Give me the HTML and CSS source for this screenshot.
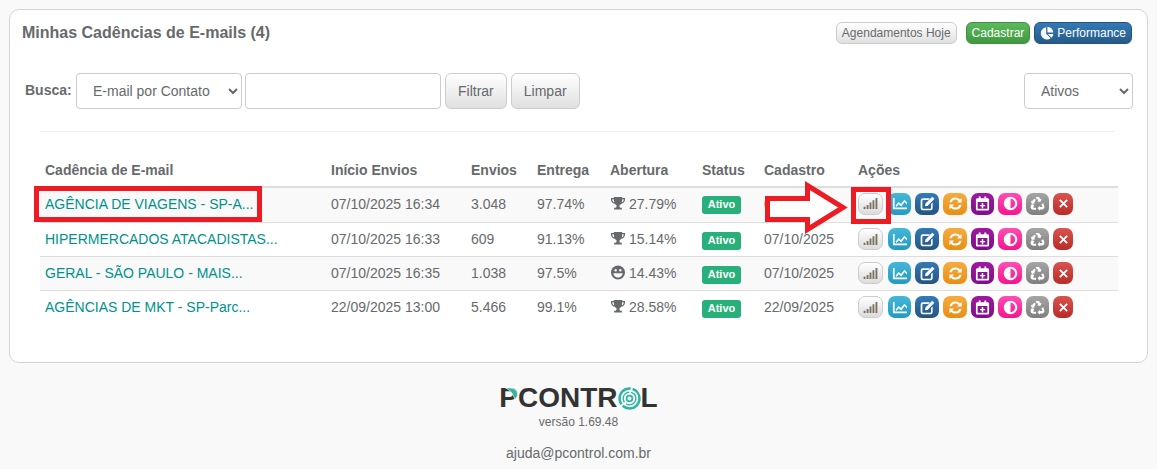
FILE: index.html
```html
<!DOCTYPE html>
<html lang="pt-BR">
<head>
  <meta charset="UTF-8" />
  <title>Minhas Cadências de E-mails</title>
  <link rel="stylesheet" href="styles.css">
</head>
<body>
  <svg class="defs" width="0" height="0" aria-hidden="true">
    <symbol id="i-bars" viewBox="0 0 16 12"><path d="M.5 9.500h2V12h-2zM3.800 7.500h2V12h-2zM7 5h2v7H7zM10.200 2.500h2V12h-2zM13.500 0h2v12h-2z"/></symbol>
    <symbol id="i-line" viewBox="0 0 16 14"><path d="M1 1h1.800v10.200H16V13H1z"/><path d="M3.800 9.200 7 5.300l2.600 2.300L13.300 3 16 5.800V8l-2.600-2.500-3.600 4.600-2.600-2.300-2.400 2.900z"/></symbol>
    <symbol id="i-edit" viewBox="0 0 16 16"><path d="M3 2.500h7.500L9 4.300H3.300a.8.800 0 0 0-.8.800v7.600c0 .4.400.8.800.8h7.600c.4 0 .8-.4.800-.8V8.500l1.800-1.700V13a2.300 2.300 0 0 1-2.300 2.300H3A2.300 2.300 0 0 1 .7 13V4.800A2.300 2.300 0 0 1 3 2.500z"/><path d="M13 .8 15.400 3 8.300 10.300l-3 .7.600-3z"/></symbol>
    <symbol id="i-sync" viewBox="0 0 16 16"><path d="M8 1.500c2 0 3.700.8 4.800 2.100L14.500 2v5H9.600l1.700-1.800A4.400 4.400 0 0 0 3.800 6.700H1.500A6.600 6.600 0 0 1 8 1.500z"/><path d="M8 14.500c-2 0-3.700-.8-4.800-2.100L1.500 14V9h4.900l-1.700 1.800a4.400 4.400 0 0 0 7.500-1.500h2.300A6.600 6.600 0 0 1 8 14.500z"/></symbol>
    <symbol id="i-cal" viewBox="0 0 16 16"><path fill-rule="evenodd" d="M4 .5h2v1.800h4V.5h2v1.800h1.500c.8 0 1.500.7 1.500 1.500v10.200c0 .8-.7 1.500-1.500 1.500h-11c-.8 0-1.500-.7-1.500-1.500V3.800c0-.8.700-1.500 1.500-1.500H4zM2.800 6.500v7.200h10.400V6.500zM7.200 7.500h1.600v2h2V11h-2v2H7.200v-2h-2V9.500h2z"/></symbol>
    <symbol id="i-half" viewBox="0 0 16 16"><path fill-rule="evenodd" d="M8 .8a7.200 7.200 0 1 1 0 14.400A7.200 7.200 0 0 1 8 .8zm0 2.200v10a5 5 0 0 0 0-10z"/></symbol>
    <symbol id="i-recycle" viewBox="0 0 16 16"><path d="M6.200 1h3.400l1.500 2.500 1.200-.7-1.200 3.600-3.600-.8 1.200-.7-1.300-2.200-1 .1zM4.500 3l1.700 1-1.700 3 1.100.7-3.700.7L.8 4.900l1.200.7zM.8 10.500 2 8.400l2.600 1.500-1.100 1.900c-.2.400 0 .8.500.8h2.500v2H3.300c-1.900 0-3.300-2.100-2.500-4.100zM15.200 10.300c.8 2-.600 4-2.500 4h-2.200v1.400L8 13l2.500-2.700v1.500h2.100c.5 0 .7-.4.500-.8l-1.200-2 2.200-1.200z"/></symbol>
    <symbol id="i-x" viewBox="0 0 16 16"><path d="m3.600 1.800 4.400 4.400 4.400-4.400 1.800 1.800L9.800 8l4.400 4.400-1.800 1.800L8 9.800l-4.400 4.400-1.800-1.800L6.200 8 1.800 3.600z"/></symbol>
    <symbol id="i-trophy" viewBox="0 0 16 16"><path fill-rule="evenodd" d="M3.500 1h9v1.200H15.500v1.600c0 2.500-1.600 4.100-3.900 4.500-.5.700-1.200 1.200-2 1.500v1.700c0 .5.300.9 1 .9h1.500V14.500h-8.200v-2.100h1.500c.7 0 1-.4 1-.9V9.800c-.8-.3-1.500-.8-2-1.500C2.100 7.900.5 6.300.5 3.800V2.200h3zM2 3.500v.4c0 1.400.7 2.400 2 2.800-.3-1-.5-2.100-.5-3.200zm12 0h-1.500c0 1.100-.2 2.200-.5 3.200 1.300-.4 2-1.400 2-2.800z"/></symbol>
    <symbol id="i-smile" viewBox="0 0 16 16"><path fill-rule="evenodd" d="M8 .5a7.500 7.500 0 1 1 0 15 7.500 7.500 0 0 1 0-15zM5.500 4.200a1.300 1.300 0 1 0 0 2.600 1.300 1.300 0 0 0 0-2.600zm5 0a1.300 1.300 0 1 0 0 2.600 1.300 1.300 0 0 0 0-2.600zM3 8.800c.2 2.800 2.300 4.500 5 4.500s4.800-1.700 5-4.500z"/></symbol>
    <symbol id="i-pie" viewBox="0 0 16 16"><path d="M7 1.500v7.300l5.200 5.200A7 7 0 1 1 7 1.500z"/><path d="M8.500.8a7 7 0 0 1 6.700 6.700H8.500zM8.900 9h6.300a7 7 0 0 1-1.900 4.400z"/></symbol>
  </svg>

  <section class="card">
    <header class="card-head">
      <h1>Minhas Cadências de E-mails (4)</h1>
      <div class="head-actions">
        <a class="btn-xs btn-light">Agendamentos Hoje</a>
        <a class="btn-xs btn-green">Cadastrar</a>
        <a class="btn-xs btn-blue"><svg class="ico-pie"><use href="#i-pie"/></svg>Performance</a>
      </div>
    </header>

    <form class="filters">
      <label class="filter-label">Busca:</label>
      <select class="field field-type"><option>E-mail por Contato</option></select>
      <input class="field field-text" type="text" />
      <button class="btn-filter" type="button">Filtrar</button>
      <button class="btn-filter" type="button">Limpar</button>
      <select class="field field-status"><option>Ativos</option></select>
    </form>

    <hr class="divider" />

    <div class="table-wrap">
      <table class="cad-table">
        <colgroup>
          <col class="c1"><col class="c2"><col class="c3"><col class="c4"><col class="c5"><col class="c6"><col class="c7"><col class="c8">
        </colgroup>
        <thead>
          <tr><th>Cadência de E-mail</th><th>Início Envios</th><th>Envios</th><th>Entrega</th><th>Abertura</th><th>Status</th><th>Cadastro</th><th>Ações</th></tr>
        </thead>
        <tbody id="rows">
          <tr>
            <td><a class="cad-link">AGÊNCIA DE VIAGENS - SP-A...</a></td><td>07/10/2025 16:34</td><td>3.048</td><td>97.74%</td>
            <td><svg class="ico-open"><use href="#i-trophy"/></svg>27.79%</td><td><span class="label-on">Ativo</span></td><td>07/10/2025</td>
            <td><div class="acts">
              <a class="act act-bars"><svg><use href="#i-bars"/></svg></a><a class="act act-line"><svg><use href="#i-line"/></svg></a><a class="act act-edit"><svg><use href="#i-edit"/></svg></a><a class="act act-sync"><svg><use href="#i-sync"/></svg></a><a class="act act-cal"><svg><use href="#i-cal"/></svg></a><a class="act act-half"><svg><use href="#i-half"/></svg></a><a class="act act-rec"><svg><use href="#i-recycle"/></svg></a><a class="act act-x"><svg><use href="#i-x"/></svg></a>
            </div></td>
          </tr>
          <tr>
            <td><a class="cad-link">HIPERMERCADOS ATACADISTAS...</a></td><td>07/10/2025 16:33</td><td>609</td><td>91.13%</td>
            <td><svg class="ico-open"><use href="#i-trophy"/></svg>15.14%</td><td><span class="label-on">Ativo</span></td><td>07/10/2025</td>
            <td><div class="acts">
              <a class="act act-bars"><svg><use href="#i-bars"/></svg></a><a class="act act-line"><svg><use href="#i-line"/></svg></a><a class="act act-edit"><svg><use href="#i-edit"/></svg></a><a class="act act-sync"><svg><use href="#i-sync"/></svg></a><a class="act act-cal"><svg><use href="#i-cal"/></svg></a><a class="act act-half"><svg><use href="#i-half"/></svg></a><a class="act act-rec"><svg><use href="#i-recycle"/></svg></a><a class="act act-x"><svg><use href="#i-x"/></svg></a>
            </div></td>
          </tr>
          <tr>
            <td><a class="cad-link">GERAL - SÃO PAULO - MAIS...</a></td><td>07/10/2025 16:35</td><td>1.038</td><td>97.5%</td>
            <td><svg class="ico-open"><use href="#i-smile"/></svg>14.43%</td><td><span class="label-on">Ativo</span></td><td>07/10/2025</td>
            <td><div class="acts">
              <a class="act act-bars"><svg><use href="#i-bars"/></svg></a><a class="act act-line"><svg><use href="#i-line"/></svg></a><a class="act act-edit"><svg><use href="#i-edit"/></svg></a><a class="act act-sync"><svg><use href="#i-sync"/></svg></a><a class="act act-cal"><svg><use href="#i-cal"/></svg></a><a class="act act-half"><svg><use href="#i-half"/></svg></a><a class="act act-rec"><svg><use href="#i-recycle"/></svg></a><a class="act act-x"><svg><use href="#i-x"/></svg></a>
            </div></td>
          </tr>
          <tr>
            <td><a class="cad-link">AGÊNCIAS DE MKT - SP-Parc...</a></td><td>22/09/2025 13:00</td><td>5.466</td><td>99.1%</td>
            <td><svg class="ico-open"><use href="#i-trophy"/></svg>28.58%</td><td><span class="label-on">Ativo</span></td><td>22/09/2025</td>
            <td><div class="acts">
              <a class="act act-bars"><svg><use href="#i-bars"/></svg></a><a class="act act-line"><svg><use href="#i-line"/></svg></a><a class="act act-edit"><svg><use href="#i-edit"/></svg></a><a class="act act-sync"><svg><use href="#i-sync"/></svg></a><a class="act act-cal"><svg><use href="#i-cal"/></svg></a><a class="act act-half"><svg><use href="#i-half"/></svg></a><a class="act act-rec"><svg><use href="#i-recycle"/></svg></a><a class="act act-x"><svg><use href="#i-x"/></svg></a>
            </div></td>
          </tr>
        </tbody>
      </table>

      <!-- marcacoes vermelhas do print -->
      <div class="mark mark-link"></div>
      <div class="mark mark-btn"></div>
      <svg class="mark-arrow" viewBox="0 0 83 53"><path d="M2.500 17.500H42.500V4.500L78 26.500 42.500 48.500V38.500H2.500z" fill="#fff" stroke="#ed1c24" stroke-width="5"/></svg>
    </div>
  </section>

  <footer class="foot">
    <div class="logo">
      <span class="logo-p">P<svg class="logo-leaf" viewBox="0 0 12 11"><path d="M0 0h3c5 0 9 2.500 9 6 0 2-1 4-3 5C8 6 5 2.500 0 0z" fill="#2fb5a3" stroke="#f9f9f9" stroke-width=".6"/></svg></span><span>CONTR</span><svg class="logo-o" viewBox="0 0 24 24"><g fill="none" stroke="#2fb5a3"><circle cx="12" cy="12" r="10.400" stroke-width="2.600" stroke-dasharray="24 2"/><circle cx="12" cy="12" r="6.600" stroke-width="1.400" stroke-dasharray="14 2"/><circle cx="12" cy="12" r="3" stroke-width="1.800"/></g></svg><span>L</span>
    </div>
    <p class="version">versão 1.69.48</p>
    <p class="help">ajuda@pcontrol.com.br</p>
  </footer>
</body>
</html>
```

FILE: styles.css
```css
/* Reset */
*, *::before, *::after {
  box-sizing: border-box;
}
body {
  margin: 0;
  padding: 9px 9px 0;
  background-color: #f9f9f9;
  color: #676a6c;
  font-family: 'Liberation Sans', Arial, sans-serif;
  font-size: 14px;
  line-height: 20px;
}
.defs {
  position: absolute;
}
.card {
  height: 354px;
  background: #fff;
  border: 1px solid #d4d4d4;
  border-radius: 10px;
  padding: 11px 15px 0 12px;
}
.card-head {
  display: flex;
  justify-content: space-between;
  align-items: center;
  height: 23px;
}
h1 {
  margin: 0;
  font-size: 16px;
  font-weight: bold;
  color: #676a6c;
}
.head-actions {
  display: flex;
  gap: 4px;
}
.btn-xs {
  display: flex;
  align-items: center;
  height: 22px;
  padding: 0 5px;
  border-radius: 6px;
  font-size: 12px;
  border: 1px solid transparent;
}
.btn-light {
  margin-right: 5px;
  background: linear-gradient(#fff, #e0e0e0);
  border-color: #ccc;
  color: #676a6c;
}
.btn-green {
  background: linear-gradient(#5cb85c, #3f9a3f);
  border-color: #3e8f3e;
  color: #fff;
}
.btn-blue {
  background: linear-gradient(#337ab7, #265a88);
  border-color: #245580;
  color: #fff;
}
.ico-pie {
  width: 14px;
  height: 14px;
  margin-right: 3px;
  fill: #fff;
}

/* Filtros */
.filters {
  display: flex;
  align-items: center;
  height: 36px;
  margin-top: 29px;
  padding-left: 3px;
  margin-right: -1px;
}
.filter-label {
  font-weight: bold;
  width: 51px;
  margin-top: -3px;
}
.field {
  height: 36px;
  background: #fff;
  border: 1px solid #ccc;
  border-radius: 4px;
  color: #676a6c;
  font-family: inherit;
  font-size: 14px;
  padding: 0 12px;
}
.field-type {
  width: 166px;
  margin-right: 3px;
}
.field-text {
  width: 196px;
  margin-right: 4px;
}
.field-status {
  width: 109px;
  margin-left: auto;
}
.btn-filter {
  height: 36px;
  margin-right: 4px;
  padding: 0 12px;
  background: linear-gradient(#fff, #e0e0e0);
  border: 1px solid #ccc;
  border-radius: 6px;
  color: #676a6c;
  font-family: inherit;
  font-size: 14px;
}
.divider {
  margin: 22px 18px 0 18px;
  border: 0;
  border-top: 1px solid #eee;
}

/* Tabela */
.table-wrap {
  position: relative;
  margin: 21px 18px 0 18px;
}
.cad-table {
  width: 1078px;
  table-layout: fixed;
  border-collapse: collapse;
}
.c1 { width: 286px; }
.c2 { width: 140px; }
.c3 { width: 66px; }
.c4 { width: 73px; }
.c5 { width: 92px; }
.c6 { width: 62px; }
.c7 { width: 94px; }
.cad-table th {
  height: 34px;
  padding: 0 5px;
  text-align: left;
  font-weight: bold;
  border-bottom: 2px solid #ddd;
}
.cad-table td {
  height: 34px;
  padding: 0 5px;
  border-top: 1px solid #ddd;
  white-space: nowrap;
}
.cad-table tbody tr:first-child td {
  height: 35px;
  padding-bottom: 2px;
  border-top: 0;
}
.cad-table tbody tr:nth-child(odd) {
  background-color: #f9f9f9;
}
.cad-link {
  color: #00918e;
}
.ico-open {
  width: 16px;
  height: 15px;
  margin-right: 3px;
  vertical-align: -2px;
  fill: #676a6c;
}
.label-on {
  display: inline-block;
  width: 39px;
  height: 18px;
  line-height: 17px;
  margin-top: 2px;
  border-radius: 3px;
  background-color: #28b07a;
  color: #fff;
  font-size: 11px;
  font-weight: bold;
  text-align: center;
  vertical-align: middle;
}
.acts {
  display: flex;
  gap: 4px;
}
.act {
  display: flex;
  align-items: center;
  justify-content: center;
  width: 23px;
  height: 22px;
  border-radius: 7px;
  fill: #fff;
}
.act svg {
  width: 15px;
  height: 15px;
}
.act-bars {
  width: 25px;
  margin-right: 1px;
  background: linear-gradient(#fff, #dcdcdc);
  border: 1px solid #ccc;
  fill: #7a7060;
}
.act-bars svg {
  height: 11px;
}
.act-line { background: linear-gradient(#45b8d8, #229ac4); }
.act-edit { background: linear-gradient(#337ab7, #245580); width: 24px; }
.act-sync { background: linear-gradient(#f6ab3f, #e88f14); width: 24px; }
.act-cal { background: linear-gradient(#a0189f, #7c0f8a); }
.act-half { background: linear-gradient(#ff4eb4, #f5148f); width: 24px; }
.act-rec { background: linear-gradient(#a5a5a5, #7f7f7f); }
.act-x { background: linear-gradient(#d9534f, #b92c28); width: 20px; }
.act-x svg { width: 11px; height: 11px; }

/* Marcacoes sobre a tabela */
.mark {
  position: absolute;
  border: 5px solid #ed1c24;
}
.mark-link {
  left: -6px;
  top: 33px;
  width: 228px;
  height: 36px;
}
.mark-btn {
  left: 811px;
  top: 34px;
  width: 40px;
  height: 37px;
}
.mark-arrow {
  position: absolute;
  left: 725px;
  top: 28px;
  width: 83px;
  height: 53px;
}

/* Rodape */
.foot {
  text-align: center;
  padding-top: 22px;
}
.logo {
  display: flex;
  justify-content: center;
  align-items: center;
  height: 26px;
  color: #333;
  font-size: 28px;
  font-weight: bold;
  line-height: 26px;
}
.logo-p {
  position: relative;
}
.logo-leaf {
  position: absolute;
  left: 6px;
  top: 3px;
  width: 13px;
  height: 11px;
}
.logo-o {
  width: 23px;
  height: 23px;
}
.version {
  margin: 1px 0 0;
  font-size: 12px;
}
.help {
  margin: 11px 0 0;
}
```
